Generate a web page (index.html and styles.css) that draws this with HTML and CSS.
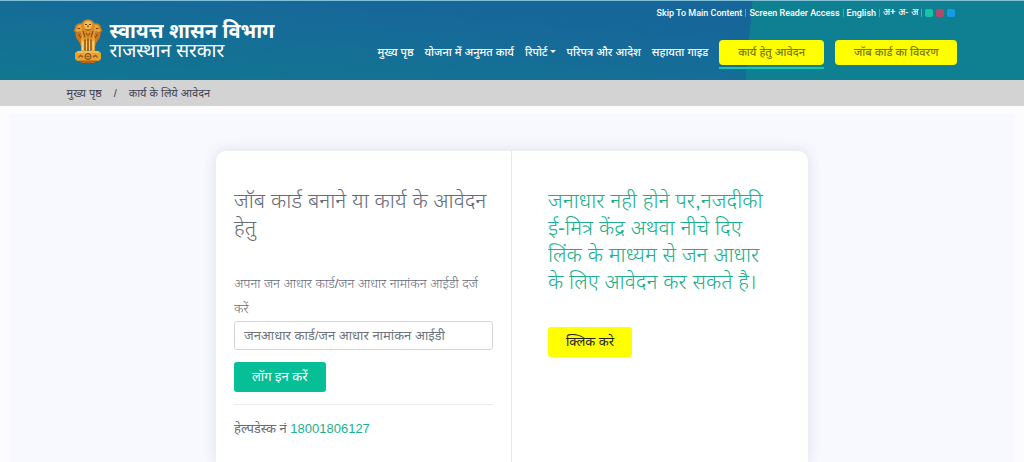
FILE: index.html
```html
<!DOCTYPE html>
<html lang="hi">
<head>
    <meta charset="UTF-8">
    <meta name="viewport" content="width=device-width, initial-scale=1.0">
    <title>स्वायत्त शासन विभाग</title>
    <link rel="stylesheet" href="styles.css">
</head>
<body>

    <header class="header">
        <div class="container header-inner">
            <a class="brand" href="#">
                <svg class="emblem" viewBox="0 0 60 90" aria-hidden="true">
                    <!-- side lions -->
                    <path fill="#c9791c" d="M18 10C9 8 3 14 4 20l-3 4 4 4c-1 8 3 14 8 20l5 14h24l5-14c5-6 9-12 8-20l4-4-3-4c1-6-5-12-14-10z"/>
                    <path fill="#e9a638" d="M17 12c-6-1-10 3-10 8l-3 4 5 3 6-2 3 8-3 12 5-6 3-24zM43 12c6-1 10 3 10 8l3 4-5 3-6-2-3 8 3 12-5-6-3-24z"/>
                    <!-- front lion -->
                    <path fill="#d98d27" d="M30 2c-8 0-13 5-13 13 0 9 1 18 5 26h16c4-8 5-17 5-26 0-8-5-13-13-13z"/>
                    <path fill="#f3bd55" d="M30 5c-5 0-8 3-8 8l2 7 6 5 6-5 2-7c0-5-3-8-8-8z"/>
                    <path fill="none" stroke="#7c3e12" stroke-width="2" d="M24 12h4M32 12h4M30 13v5M25 21c3 3 7 3 10 0M20 25l4 12M40 25l-4 12M26 29l4 5 4-5M9 20h5M46 20h5M11 31l5 8M49 31l-5 8"/>
                    <path fill="#e8a436" d="M16 40h7l1 25h-8zM25 40h4v25h-4zM31 40h4v25h-4zM37 40h7v25h-8z"/>
                    <path fill="#f7d27a" d="M18 45h3v18h-3zM26 45h2v18h-2zM32 45h2v18h-2zM39 45h3v18h-3z"/>
                    <path fill="none" stroke="#804010" stroke-width="2" d="M24 42v22M30 40v24M36 42v22"/>
                    <!-- base with the wheel -->
                    <path fill="#e6a332" d="M9 65h42l5 4v12l-5 4H9l-5-4V69z"/>
                    <path fill="#b86418" d="M12 84h36l-6 5H18z"/>
                    <path fill="none" stroke="#f9d67c" stroke-width="2" d="M9 67h42"/>
                    <circle cx="30" cy="76" r="6" fill="#f3bd4e" stroke="#803c10" stroke-width="2"/>
                    <path fill="none" stroke="#803c10" stroke-width="1" d="M30 70v12M24 76h12M26 72l8 8M34 72l-8 8"/>
                    <path fill="none" stroke="#a75b17" stroke-width="3" d="M11 78l4-4 5 3M49 78l-4-4-5 3"/>
                </svg>
                <span class="brand-text">
                    <strong>स्वायत्त शासन विभाग</strong>
                    <span>राजस्थान सरकार</span>
                </span>
            </a>

            <div class="header-right">
                <div class="top-links">
                    <a href="#main">Skip To Main Content</a><i></i>
                    <a href="#">Screen Reader Access</a><i></i>
                    <a href="#">English</a><i></i>
                    <button type="button">अ+</button>
                    <button type="button">अ-</button>
                    <button type="button">अ</button><i></i>
                    <button type="button" class="theme theme-green" aria-label="Green"></button>
                    <button type="button" class="theme theme-red" aria-label="Red"></button>
                    <button type="button" class="theme theme-blue" aria-label="Blue"></button>
                </div>
                <nav class="nav">
                    <a href="#">मुख्य पृष्ठ</a>
                    <a href="#">योजना में अनुमत कार्य</a>
                    <a href="#" class="dropdown">रिपोर्ट</a>
                    <a href="#">परिपत्र और आदेश</a>
                    <a href="#">सहायता गाइड</a>
                    <a href="#" class="nav-btn active">कार्य हेतु आवेदन</a>
                    <a href="#" class="nav-btn">जॉब कार्ड का विवरण</a>
                </nav>
            </div>
        </div>
    </header>

    <div class="breadcrumb">
        <div class="container">
            <a href="#">मुख्य पृष्ठ</a>
            <span>/</span>
            <span>कार्य के लिये आवेदन</span>
        </div>
    </div>

    <main class="main" id="main">
        <div class="card">
            <form class="login">
                <h2>जॉब कार्ड बनाने या कार्य के आवेदन हेतु</h2>
                <label for="janaadhar">अपना जन आधार कार्ड/जन आधार नामांकन आईडी दर्ज करें</label>
                <input type="text" id="janaadhar" placeholder="जनआधार कार्ड/जन आधार नामांकन आईडी">
                <button type="button" class="btn btn-green">लॉग इन करें</button>
                <p class="helpdesk">हेल्पडेस्क नं <a href="tel:18001806127">18001806127</a></p>
            </form>
            <section class="info">
                <h2>जनाधार नही होने पर,नजदीकी ई-मित्र केंद्र अथवा नीचे दिए लिंक के माध्यम से जन आधार के लिए आवेदन कर सकते है।</h2>
                <a href="#" class="btn btn-yellow">क्लिक करे</a>
            </section>
        </div>
    </main>

</body>
</html>
```
FILE: styles.css
```css
* {
    box-sizing: border-box;
}
body {
    margin: 0;
    font-family: "Liberation Sans", "Noto Sans Devanagari", "Noto Sans", sans-serif;
    font-size: 13px;
    color: #666b7a;
    background-color: #fcfcff;
}
a {
    color: inherit;
    text-decoration: none;
}
button, input {
    font-family: inherit;
}
.container {
    width: 87%;
    margin: 0 auto;
}

/* Header */
.header {
    border-top: 1px solid #7fc0d8;
    color: #fff;
    background: linear-gradient(95deg, transparent 73%, #0f8092 73%), linear-gradient(185deg, #17669a 30%, #127791 100%);
}
.header-inner {
    display: flex;
    justify-content: space-between;
    height: 79px;
}
.brand {
    display: flex;
    align-items: center;
    gap: 7px;
    padding-left: 6px;
}
.emblem {
    width: 30px;
    height: 46px;
}
.brand-text {
    display: flex;
    flex-direction: column;
    font-size: 19px;
    line-height: 20px;
    white-space: nowrap;
}
.brand-text strong {
    font-size: 20px;
}
.header-right {
    display: flex;
    flex-direction: column;
    align-items: flex-end;
    gap: 19px;
    padding-top: 4px;
}
.top-links {
    display: flex;
    align-items: center;
    gap: 3px;
    height: 16px;
    padding-right: 2px;
    font-family: Roboto, "Noto Sans Devanagari", sans-serif;
    font-size: 9px;
    font-weight: 500;
}
.top-links i {
    width: 1px;
    height: 8px;
    background-color: #5e9fb5;
}
.top-links button {
    padding: 0;
    border: none;
    font-size: 9px;
    font-weight: 500;
    color: #fff;
    background: none;
    cursor: pointer;
}
.top-links .theme {
    width: 8px;
    height: 8px;
    border-radius: 2px;
}
.top-links .theme-green {
    background-color: #12c5a6;
}
.top-links .theme-red {
    background-color: #b5476b;
}
.top-links .theme-blue {
    background-color: #189ae6;
}
.nav {
    display: flex;
    align-items: flex-start;
    gap: 11px;
    font-size: 11px;
    font-weight: 500;
    line-height: 25px;
    white-space: nowrap;
}
.dropdown::after {
    content: "";
    display: inline-block;
    margin-left: 2px;
    vertical-align: 3px;
    border: 3px solid transparent;
    border-top-color: #fff;
    border-bottom: 0;
}
.nav-btn {
    position: relative;
    padding: 0 19px;
    border-radius: 4px;
    color: #77780c;
    background-color: #ff0;
}
.nav-btn.active::after {
    content: "";
    position: absolute;
    left: 0;
    right: 0;
    bottom: -4px;
    height: 2px;
    background-color: #1cc5b4;
}

/* Breadcrumb */
.breadcrumb {
    font-size: 11px;
    line-height: 26px;
    color: #3f4254;
    background-color: #d3d3d3;
}
.breadcrumb .container {
    display: flex;
    gap: 12px;
}

/* Card */
.main {
    margin: 7px 10px 0;
    padding: 38px 20px 0;
    background-color: #f8f9fe;
}
.card {
    display: grid;
    grid-template-columns: 1fr 1fr;
    max-width: 592px;
    min-height: 311px;
    margin: 0 auto;
    border-radius: 10px 10px 0 0;
    background-color: #fff;
    box-shadow: 0 0 14px rgba(60, 70, 110, 0.15);
}
.login {
    padding: 36px 18px 0;
    border-right: 1px solid #e9eaee;
}
.info {
    padding: 36px 36px 0;
}
h2 {
    margin: 0;
    font-size: 21px;
    font-weight: 300;
    line-height: 27px;
}
.login label {
    display: block;
    margin-top: 30px;
    font-weight: 300;
    line-height: 25px;
}
.login input {
    display: block;
    width: 100%;
    height: 29px;
    padding: 0 9px;
    border: 1px solid #d3d5da;
    border-radius: 3px;
    font-size: 13px;
}
.login input::placeholder {
    color: #6f7580;
}
.btn {
    display: inline-block;
    height: 30px;
    padding: 0 18px;
    border: none;
    border-radius: 3px;
    font-size: 13px;
    line-height: 30px;
    cursor: pointer;
}
.btn-green {
    margin-top: 12px;
    color: #fff;
    background-color: #07bf96;
}
.btn-yellow {
    margin-top: 32px;
    color: #222;
    background-color: #ff0;
}
.helpdesk {
    margin: 12px 0 0;
    padding-top: 12px;
    border-top: 1px solid #ebecef;
    line-height: 24px;
}
.helpdesk a, .info h2 {
    color: #1cb08d;
}
```
